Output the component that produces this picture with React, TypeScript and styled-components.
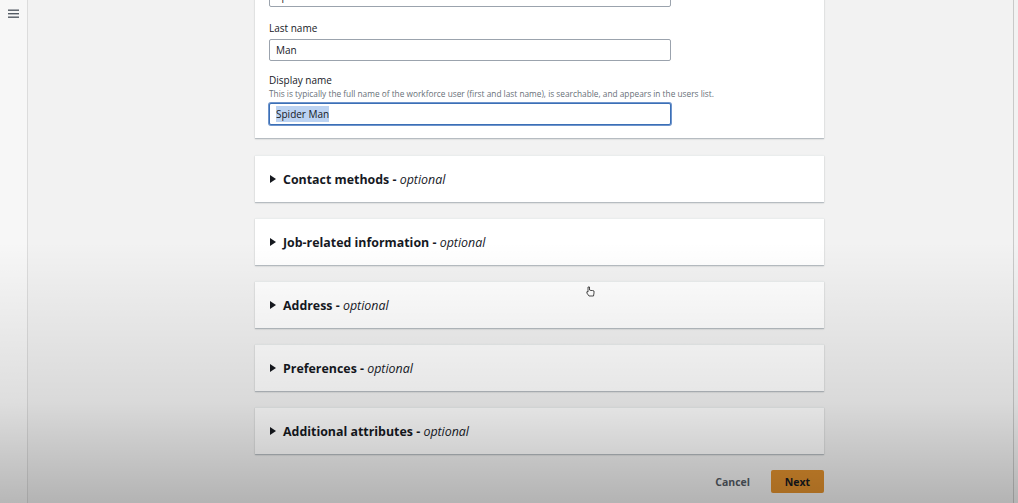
import React from "react";
import styled, { createGlobalStyle } from "styled-components";

const Global = createGlobalStyle`
  html, body { margin: 0; padding: 0; }
  body {
    width: 1018px; height: 503px; overflow: hidden;
    background: #f2f2f2;
    font-family: "Open Sans", "Noto Sans", Arial, sans-serif;
    color: #16191f;
  }
`;

const Shell = styled.div`
  display: flex;
  width: 1018px;
  height: 503px;
  overflow: hidden;
  position: relative;
`;

const SideNav = styled.div`
  width: 27px;
  flex: none;
  background: #f7f7f7;
  border-right: 1px solid #dcdcdc;
  padding-top: 9px;
  display: flex;
  justify-content: center;
  box-sizing: content-box;
`;

const Main = styled.div`
  flex: 1;
  display: flex;
  justify-content: flex-start;
  padding-left: 227px;
  border-right: 1px solid #c9c9c9;
  margin-right: 4px;
`;

const Column = styled.div`
  width: 569px;
  margin-top: -52px;
  display: flex;
  flex-direction: column;
  gap: 16px;
`;

const Card = styled.div`
  background: #fff;
  box-shadow: 0 1px 1px rgba(0, 31, 63, 0.18), 0 1px 2px rgba(0,0,0,0.12);
  border-top: 1px solid #eaeded;
`;

const FormCard = styled(Card)`
  padding: 18px 14px 13px;
  display: flex;
  flex-direction: column;
  margin-bottom: 1px;
`;

const Field = styled.div<{ $top?: number }>`
  display: flex;
  flex-direction: column;
  margin-top: ${(p) => p.$top ?? 0}px;
`;

const Label = styled.div`
  font-size: 10px;
  line-height: 15px;
  color: #16191f;
  margin-bottom: 3px;
`;

const Hint = styled.div`
  font-size: 8.3px;
  line-height: 10px;
  color: #687078;
  margin-top: -2px;
  margin-bottom: 4px;
  white-space: nowrap;
`;

const InputBox = styled.div<{ $focus?: boolean }>`
  width: 402px;
  height: 22px;
  box-sizing: border-box;
  border: 1px solid ${(p) => (p.$focus ? "#3b6fb6" : "#9ba3ad")};
  box-shadow: ${(p) => (p.$focus ? "0 0 0 1px #6f95cc" : "none")};
  border-radius: 2px;
  display: flex;
  align-items: center;
  padding-left: 6px;
  font-size: 10px;
  color: #16191f;
  background: #fff;
`;

const Selected = styled.span`
  background: #bcd3f2;
  padding: 1px 0;
`;

const Section = styled(Card)`
  height: 46px;
  display: flex;
  align-items: center;
  padding-left: 15px;
  gap: 7px;
`;

const Caret = styled.span`
  width: 0;
  height: 0;
  border-top: 4px solid transparent;
  border-bottom: 4px solid transparent;
  border-left: 6px solid #16191f;
`;

const Title = styled.div`
  font-size: 12.4px;
  font-weight: 700;
  color: #16191f;
  em {
    font-weight: 400;
    font-style: italic;
  }
`;

const Actions = styled.div`
  display: flex;
  justify-content: flex-end;
  align-items: center;
  gap: 21px;
  margin-top: 0;
`;

const LinkButton = styled.button`
  border: none;
  background: none;
  font-family: inherit;
  font-size: 10.5px;
  font-weight: 700;
  color: #545b64;
  padding: 0;
`;

const PrimaryButton = styled.button`
  border: none;
  background: #e0902e;
  border-radius: 2px;
  width: 53px;
  height: 23px;
  font-family: inherit;
  font-size: 10.5px;
  font-weight: 700;
  color: #16191f;
  padding: 0;
`;

const Vignette = styled.div`
  position: absolute;
  inset: 0;
  pointer-events: none;
  background: linear-gradient(
    to bottom,
    rgba(0, 0, 0, 0) 0%,
    rgba(0, 0, 0, 0) 48%,
    rgba(0, 0, 0, 0.1) 80%,
    rgba(0, 0, 0, 0.26) 100%
  );
`;

const Cursor = styled.div`
  position: absolute;
  left: 586px;
  top: 280px;
  pointer-events: none;
`;

const sections = [
  "Contact methods",
  "Job-related information",
  "Address",
  "Preferences",
  "Additional attributes",
];

export default function App() {
  return (
    <>
      <Global />
      <Shell>
        <SideNav>
          <svg width="12" height="10" viewBox="0 0 12 10">
            <rect x="0" y="0.5" width="11" height="1.4" fill="#545b64" />
            <rect x="0" y="4" width="11" height="1.4" fill="#545b64" />
            <rect x="0" y="7.5" width="11" height="1.4" fill="#545b64" />
          </svg>
        </SideNav>
        <Main>
          <Column>
            <FormCard>
              <Field>
                <Label>First name</Label>
                <InputBox>Spider</InputBox>
              </Field>
              <Field $top={14}>
                <Label>Last name</Label>
                <InputBox>Man</InputBox>
              </Field>
              <Field $top={12}>
                <Label>Display name</Label>
                <Hint>
                  This is typically the full name of the workforce user (first and last name), is
                  searchable, and appears in the users list.
                </Hint>
                <InputBox $focus>
                  <Selected>Spider Man</Selected>
                </InputBox>
              </Field>
            </FormCard>
            {sections.map((s) => (
              <Section key={s}>
                <Caret />
                <Title>
                  {s} - <em>optional</em>
                </Title>
              </Section>
            ))}
            <Actions>
              <LinkButton>Cancel</LinkButton>
              <PrimaryButton>Next</PrimaryButton>
            </Actions>
          </Column>
        </Main>
        <Cursor>
          <svg width="9" height="11" viewBox="0 0 9 11">
            <path
              d="M2 1 L2 6 L1 5.5 L0.8 7 L3 10 L7.5 10 L8 7 L8 5 L6.5 4.5 L5 4.5 L3.5 4 L3.5 1 Z"
              fill="#fff"
              stroke="#222"
              strokeWidth="0.8"
            />
          </svg>
        </Cursor>
        <Vignette />
      </Shell>
    </>
  );
}
